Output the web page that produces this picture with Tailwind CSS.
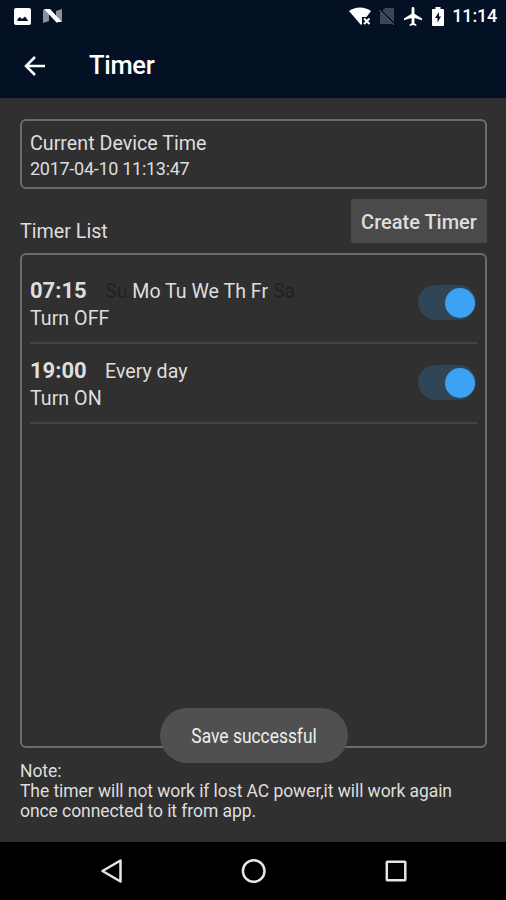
<!DOCTYPE html>
<html lang="en">
<head>
<meta charset="utf-8">
<title>Timer</title>
<script src="https://cdn.jsdelivr.net/npm/@tailwindcss/browser@4"></script>
</head>
<body class="w-[506px] h-[900px] overflow-hidden bg-[#303030] text-[#dedede] font-['Roboto',sans-serif] flex flex-col">
<header class="bg-[#041024] h-[98px] shrink-0 text-white">
  <div class="h-8 flex items-center justify-between pl-[14px] pr-[9px]">
    <div class="flex items-center gap-3">
      <svg class="w-[17px] h-[17px]" viewBox="0 0 17 17"><rect width="17" height="17" rx="2" fill="#fff"/><path d="M3.500 13v-2l2.500-2 2 2L11 8.500l3 4v.5z" fill="#041024"/></svg>
      <svg class="w-[20px] h-4" viewBox="0 0 20 16"><path d="M0 2l6-1v12l-6 2zM13 3l6-2v12l-6 2z" fill="#8b919c"/><path d="M1 1h6l12 13h-6z" fill="#fff"/></svg>
    </div>
    <div class="flex items-center">
      <svg class="w-[23px] h-[18px]" viewBox="0 0 23 18"><path d="M0 4C6-.7 16-.7 22 4l-4.500 6H13v7l-1 1z" fill="#fff"/><path d="M15 11.500l5.500 5.500M20.500 11.500L15 17" stroke="#fff" stroke-width="2"/></svg>
      <svg class="w-[17px] h-[18px] ml-[7px]" viewBox="0 0 17 18"><path d="M6 1h9v16H1V6z" fill="#3d4655"/><path d="M0 1.500l16 16" stroke="#041024" stroke-width="1.500"/><path d="M0 3l15 15" stroke="#59616e" stroke-width="1"/></svg>
      <svg class="w-[18px] h-[19px] ml-[8px]" viewBox="2 2 19 20"><path d="M21 16v-2l-8-5V3.500a1.500 1.500 0 0 0-3 0V9l-8 5v2l8-2.500V19l-2 1.500V22l3.500-1 3.500 1v-1.500L13 19v-5.500z" fill="#fff"/></svg>
      <svg class="w-3 h-[19px] ml-[10px]" viewBox="0 0 12 19"><path d="M3.500 0h5v2H11q1 0 1 1v15q0 1-1 1H1q-1 0-1-1V3q0-1 1-1h2.500z" fill="#fff"/><path d="M7 5L3 11H5.500v4.500L9 9.500H7z" fill="#041024"/></svg>
      <span class="text-[18px] leading-8 font-medium ml-[8px] -tracking-[.2px]">11:14</span>
    </div>
  </div>
  <div class="h-[67px] flex items-center pl-[24px]">
    <svg class="w-[22px] h-[20px]" viewBox="0 0 22 20" fill="none" stroke="#fff" stroke-width="2.500"><path d="M11 1L2 10l9 9M2 10h19"/></svg>
    <h1 class="ml-[43px] text-[25.500px] tracking-[-.3px] font-medium">Timer</h1>
  </div>
</header>
<main class="h-[744px] shrink-0 px-5 pr-[19px] pt-[21px] flex flex-col">
  <section class="h-[70px] shrink-0 border-2 border-[#6c6c6c] rounded-md px-2 pt-[10px]">
    <div class="text-[19.700px] leading-[26px]">Current Device Time</div>
    <div class="text-[18px] tracking-[-.28px] leading-[23px]">2017-04-10 11:13:47</div>
  </section>
  <div class="h-[64px] shrink-0 flex justify-between pt-[10px]">
    <h2 class="text-[19.700px] leading-6 pt-[21px]">Timer List</h2>
    <button class="w-[136px] h-[44px] bg-[#4a4a4a] rounded-[2px] pt-[2px] text-[20px] font-medium">Create Timer</button>
  </div>
  <section class="relative h-[495px] shrink-0 border-2 border-[#6c6c6c] rounded-md px-2">
    <div class="h-[89px] border-b-2 border-[#444] flex justify-between pt-[22px]">
      <div>
        <div class="flex items-baseline leading-7"><b class="w-[75px] text-[22px] font-bold">07:15</b><span class="text-[19.600px]"><span class="text-[#212121]">Su </span>Mo Tu We Th Fr <span class="text-[#212121]">Sa</span></span></div>
        <div class="text-[19.700px] leading-[26px]">Turn OFF</div>
      </div>
      <div class="w-[58px] h-[35px] mt-[8px] mr-[1px] rounded-full bg-[#304656] flex items-center justify-end pr-px"><div class="w-[30px] h-[30px] rounded-full bg-[#3ca2f3]"></div></div>
    </div>
    <div class="h-[80px] border-b-2 border-[#444] flex justify-between pt-[13px]">
      <div>
        <div class="flex items-baseline leading-7"><b class="w-[75px] text-[22px] font-bold">19:00</b><span class="text-[19.600px]">Every day</span></div>
        <div class="text-[19.700px] leading-[26px]">Turn ON</div>
      </div>
      <div class="w-[58px] h-[35px] mt-[8px] mr-[1px] rounded-full bg-[#304656] flex items-center justify-end pr-px"><div class="w-[30px] h-[30px] rounded-full bg-[#3ca2f3]"></div></div>
    </div>
    <div class="absolute left-[138px] top-[453px] w-[188px] h-[55px] rounded-full bg-[#505050] text-[#eee] flex items-center justify-center text-[20px]"><span class="inline-block scale-x-[.87] whitespace-nowrap">Save successful</span></div>
  </section>
  <p class="pt-[13px] text-[17.500px] tracking-[-.07px] leading-[20px] whitespace-nowrap">Note:<br>The timer will not work if lost AC power,it will work again<br>once connected to it from app.</p>
</main>
<nav class="h-[58px] shrink-0 bg-black flex items-center pl-[100px]">
  <svg class="w-[23px] h-[26px]" viewBox="0 0 23 26" fill="none" stroke="#e6e6e6" stroke-width="2.500"><path d="M20.500 2.500v21L2.500 13z" stroke-linejoin="round"/></svg>
  <svg class="w-[26px] h-[26px] ml-[118px]" viewBox="0 0 26 26" fill="none" stroke="#e6e6e6" stroke-width="2.500"><circle cx="12.700" cy="13" r="10.800"/></svg>
  <svg class="w-[22px] h-[22px] ml-[118px]" viewBox="0 0 22 22" fill="none" stroke="#e6e6e6" stroke-width="2.500"><rect x="1.800" y="1.800" width="18.500" height="18.500" rx=".5"/></svg>
</nav>
</body>
</html>
